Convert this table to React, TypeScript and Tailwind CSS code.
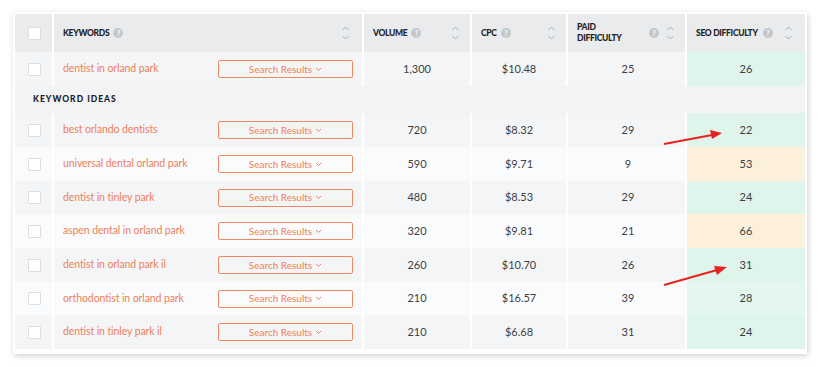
import React from "react";

const font = { fontFamily: "Lato, 'Open Sans', sans-serif" };

function Q() {
  return (
    <span className="inline-flex items-center justify-center w-[10px] h-[10px] rounded-full bg-[#c4c7c9] text-white text-[7px] font-bold leading-none shrink-0">?</span>
  );
}

function Sort() {
  return (
    <svg width="9" height="16" viewBox="0 0 9 16" className="shrink-0">
      <path d="M1.5 5 L4.5 2 L7.5 5" fill="none" stroke="#a9adb0" strokeWidth="1" />
      <path d="M1.5 11 L4.5 14 L7.5 11" fill="none" stroke="#a9adb0" strokeWidth="1" />
    </svg>
  );
}

function Box() {
  return <div className="w-[13px] h-[13px] bg-white border border-[#dcdfe1] rounded-[1px]" />;
}

function Btn() {
  return (
    <div className="w-[135px] h-[18px] border border-[#ee8862] rounded-[2px] flex items-center justify-center gap-[3px] text-[10px] text-[#ee7f5b] bg-transparent">
      <span>Search Results</span>
      <svg width="7" height="5" viewBox="0 0 7 5"><path d="M1 1 L3.5 3.5 L6 1" fill="none" stroke="#ee7f5b" strokeWidth="1" /></svg>
    </div>
  );
}

type Row = { k: string; v: string; c: string; p: string; s: string; sc: string; h: string };

const rows: Row[] = [
  { k: "best orlando dentists", v: "720", c: "$8.32", p: "29", s: "22", sc: "bg-[#dff4eb]", h: "h-[34px]" },
  { k: "universal dental orland park", v: "590", c: "$9.71", p: "9", s: "53", sc: "bg-[#fcf0dd]", h: "h-[34px]" },
  { k: "dentist in tinley park", v: "480", c: "$8.53", p: "29", s: "24", sc: "bg-[#dff4eb]", h: "h-[33px]" },
  { k: "aspen dental in orland park", v: "320", c: "$9.81", p: "21", s: "66", sc: "bg-[#fcf0dd]", h: "h-[34px]" },
  { k: "dentist in orland park il", v: "260", c: "$10.70", p: "26", s: "31", sc: "bg-[#dff4eb]", h: "h-[34px]" },
  { k: "orthodontist in orland park", v: "210", c: "$16.57", p: "39", s: "28", sc: "bg-[#e3f7ef]", h: "h-[33px]" },
  { k: "dentist in tinley park il", v: "210", c: "$6.68", p: "31", s: "24", sc: "bg-[#dff4eb]", h: "h-[34px]" },
];

function DataRow({ r, bg }: { r: Row; bg: string }) {
  return (
    <div className={`flex ${r.h} ${bg} text-[11px] text-[#3b3f44]`}>
      <div className="w-[37px] flex items-center justify-center pl-[1px]"><Box /></div>
      <div className="w-[310px] border-l-2 border-white flex items-center justify-between pl-[9px] pr-[9px]">
        <span className="text-[#ee7f5b] text-[10.5px] tracking-[-0.1px]">{r.k}</span>
        <Btn />
      </div>
      <div className="w-[108px] border-l-2 border-white flex items-center justify-center">{r.v}</div>
      <div className="w-[96px] border-l-2 border-white flex items-center justify-center">{r.c}</div>
      <div className="w-[119px] border-l-2 border-white flex items-center justify-center pl-[3px]">{r.p}</div>
      <div className={`w-[120px] border-l-2 border-white flex items-center justify-center ${r.sc}`}>{r.s}</div>
    </div>
  );
}

export default function App() {
  const first: Row = { k: "dentist in orland park", v: "1,300", c: "$10.48", p: "25", s: "26", sc: "bg-[#dff4eb]", h: "h-[34px]" };
  return (
    <div className="w-[820px] h-[367px] bg-white relative" style={font}>
      <div className="absolute left-[13px] top-[12px] w-[794px] h-[342px] bg-white p-[2px] shadow-[1px_2px_6px_rgba(0,0,0,0.18)]">
        <div className="w-[790px] flex flex-col">
          {/* header */}
          <div className="flex h-[38px] bg-[#e9ebec] text-[8.5px] font-black text-[#1e2226] tracking-[-0.3px]">
            <div className="w-[37px] flex items-center justify-center pl-[1px]"><Box /></div>
            <div className="w-[310px] border-l-2 border-white flex items-center justify-between pl-[9px] pr-[12px]">
              <div className="flex items-center gap-[4px]"><span>KEYWORDS</span><Q /></div>
              <Sort />
            </div>
            <div className="w-[108px] border-l-2 border-white flex items-center justify-between pl-[9px] pr-[10px]">
              <div className="flex items-center gap-[4px]"><span>VOLUME</span><Q /></div>
              <Sort />
            </div>
            <div className="w-[96px] border-l-2 border-white flex items-center justify-between pl-[9px] pr-[10px]">
              <div className="flex items-center gap-[4px]"><span>CPC</span><Q /></div>
              <Sort />
            </div>
            <div className="w-[119px] border-l-2 border-white flex items-center justify-between pl-[9px] pr-[10px]">
              <span className="leading-[11px]">PAID<br />DIFFICULTY</span>
              <div className="flex items-center gap-[7px]"><Q /><Sort /></div>
            </div>
            <div className="w-[120px] border-l-2 border-white flex items-center justify-between pl-[9px] pr-[12px]">
              <div className="flex items-center gap-[5px]"><span>SEO DIFFICULTY</span><Q /></div>
              <Sort />
            </div>
          </div>
          <DataRow r={first} bg="bg-[#f4f5f6]" />
          <div className="h-[27px] bg-[#f2f3f4] flex items-center pl-[18px] text-[8.5px] font-black tracking-[1px] text-[#1e2226]">KEYWORD IDEAS</div>
          {rows.map((r, i) => (
            <DataRow key={i} r={r} bg={i % 2 === 0 ? "bg-[#f4f5f6]" : "bg-[#fafbfc]"} />
          ))}
        </div>
      </div>
      <svg className="absolute left-0 top-0 pointer-events-none" width="820" height="367">
        <line x1="664" y1="144" x2="712" y2="135" stroke="#e8231f" strokeWidth="2" />
        <polygon points="722,133 710,130 712,139" fill="#e8231f" />
        <line x1="664" y1="285" x2="717" y2="270" stroke="#e8231f" strokeWidth="2" />
        <polygon points="727,267 714,266 717,275" fill="#e8231f" />
      </svg>
    </div>
  );
}
